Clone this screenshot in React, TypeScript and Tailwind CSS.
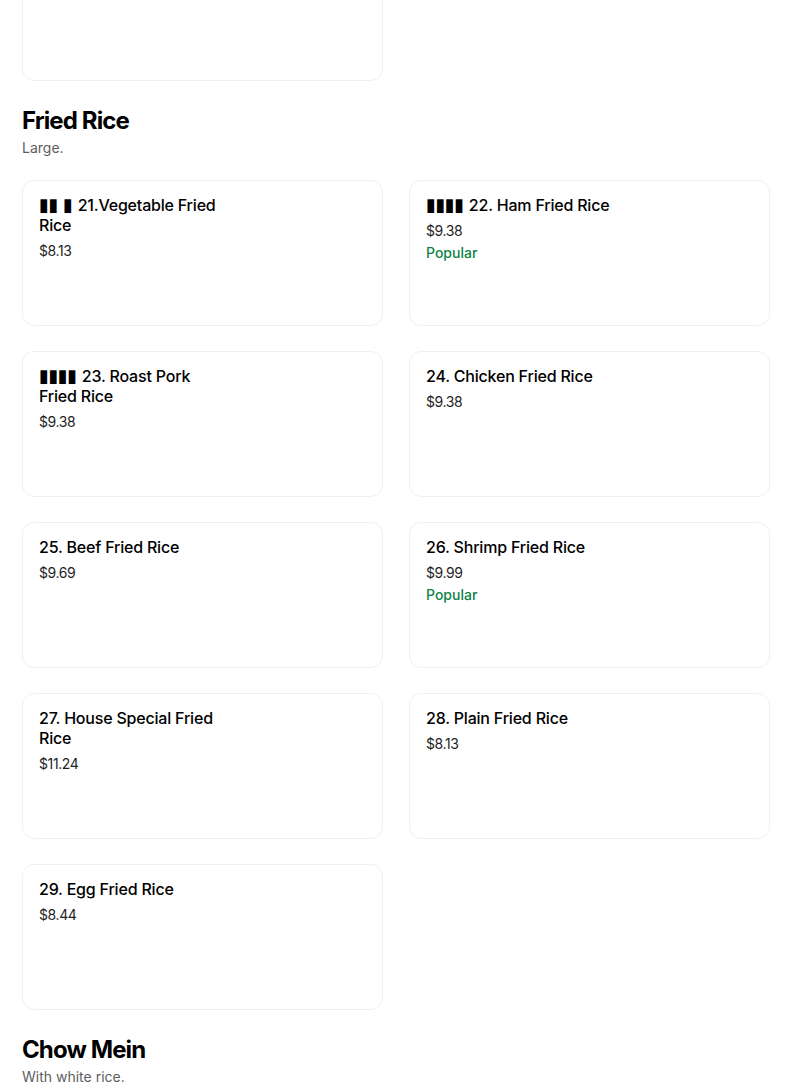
import React from "react";

type Item = { mark?: string; name: string; price: string; popular?: boolean };

const friedRice: Item[] = [
  { mark: "▮▮ ▮", name: "21.Vegetable Fried Rice", price: "$8.13" },
  { mark: "▮▮▮▮", name: "22. Ham Fried Rice", price: "$9.38", popular: true },
  { mark: "▮▮▮▮", name: "23. Roast Pork Fried Rice", price: "$9.38" },
  { name: "24. Chicken Fried Rice", price: "$9.38" },
  { name: "25. Beef Fried Rice", price: "$9.69" },
  { name: "26. Shrimp Fried Rice", price: "$9.99", popular: true },
  { name: "27. House Special Fried Rice", price: "$11.24" },
  { name: "28. Plain Fried Rice", price: "$8.13" },
  { name: "29. Egg Fried Rice", price: "$8.44" },
];

function ItemCard({ item }: { item?: Item }) {
  return (
    <div className="h-[146px] rounded-xl border border-[#f0f0f0] bg-white px-4 pt-[14px]">
      {item && (
        <div className="w-[184px]">
          <div className="text-[16px] leading-5 font-medium tracking-[-0.2px] text-black">
            {item.mark && (
              <span className="text-[18px] leading-none tracking-[-0.5px]" style={{ fontFamily: "'DejaVu Sans', sans-serif" }}>
                {item.mark}{" "}
              </span>
            )}
            {item.name}
          </div>
          <div className="mt-[6px] text-[14px] leading-5 text-[#1f1f1f] tracking-[-0.4px]">{item.price}</div>
          {item.popular && (
            <div className="mt-[2px] text-[14px] leading-5 font-medium text-[#0e8345]">Popular</div>
          )}
        </div>
      )}
    </div>
  );
}

function SectionHeader({ title, subtitle }: { title: string; subtitle: string }) {
  return (
    <div className="mt-[24px] mb-[22px]">
      <h2 className="text-[24px] leading-8 font-bold tracking-[-0.9px] text-black">{title}</h2>
      <p className="mt-[1px] text-[14px] leading-5 text-[#5e5e5e]">{subtitle}</p>
    </div>
  );
}

export default function App() {
  return (
    <div
      className="min-h-[1085px] overflow-hidden bg-white pl-[22px] pr-[34px]"
      style={{ fontFamily: "Inter, 'Noto Sans', sans-serif" }}
    >
      {/* previous section, scrolled off */}
      <div className="-mt-[65px] grid grid-cols-2 gap-[26px]">
        <ItemCard />
      </div>

      <SectionHeader title="Fried Rice" subtitle="Large." />
      <div className="grid grid-cols-2 gap-[25px_26px]">
        {friedRice.map((item) => (
          <ItemCard key={item.name} item={item} />
        ))}
      </div>

      <SectionHeader title="Chow Mein" subtitle="With white rice." />
    </div>
  );
}
